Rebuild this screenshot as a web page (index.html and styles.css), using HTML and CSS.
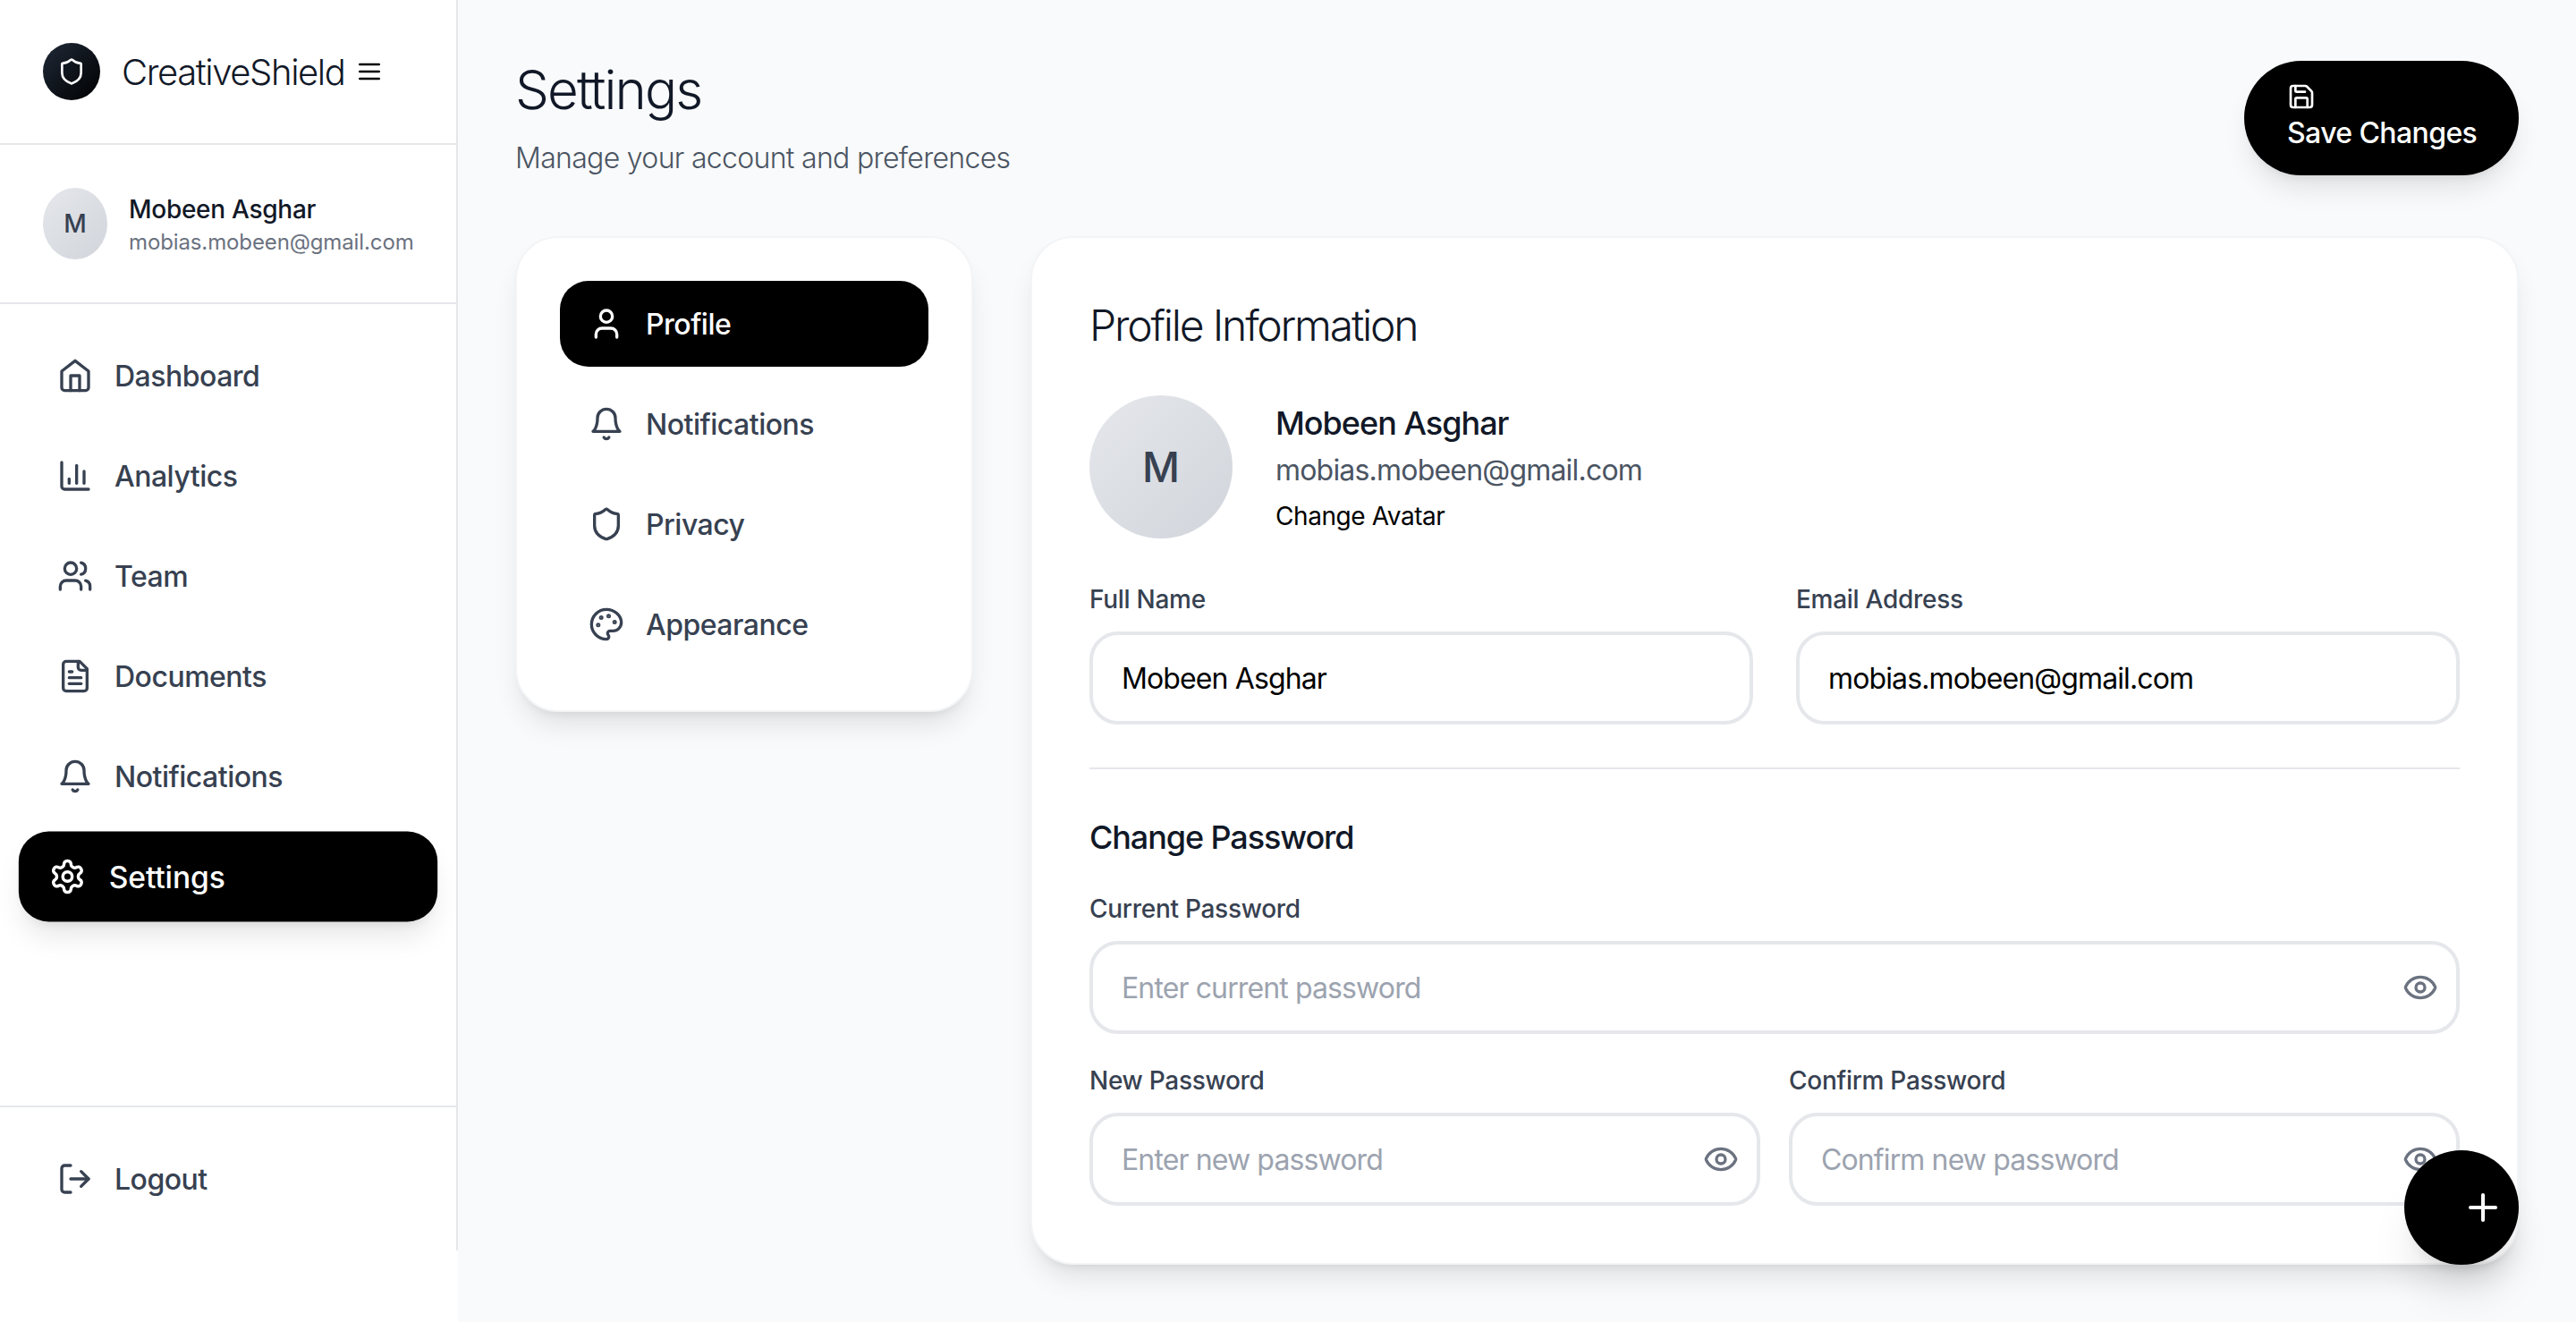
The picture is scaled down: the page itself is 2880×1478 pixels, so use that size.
FILE: index.html
```html
<!DOCTYPE html>
<html lang="en">
<head>
<meta charset="utf-8">
<title>Settings</title>
<link rel="stylesheet" href="styles.css">
</head>
<body>
<svg class="sprite" aria-hidden="true">
  <symbol id="i-home" viewBox="0 0 24 24"><path d="m3 9 9-7 9 7v11a2 2 0 0 1-2 2H5a2 2 0 0 1-2-2z"/><polyline points="9 22 9 12 15 12 15 22"/></symbol>
  <symbol id="i-chart" viewBox="0 0 24 24"><path d="M3 3v16a2 2 0 0 0 2 2h16"/><path d="M18 17V9"/><path d="M13 17V5"/><path d="M8 17v-3"/></symbol>
  <symbol id="i-users" viewBox="0 0 24 24"><path d="M16 21v-2a4 4 0 0 0-4-4H6a4 4 0 0 0-4 4v2"/><circle cx="9" cy="7" r="4"/><path d="M22 21v-2a4 4 0 0 0-3-3.87"/><path d="M16 3.13a4 4 0 0 1 0 7.75"/></symbol>
  <symbol id="i-file" viewBox="0 0 24 24"><path d="M15 2H6a2 2 0 0 0-2 2v16a2 2 0 0 0 2 2h12a2 2 0 0 0 2-2V7Z"/><path d="M14 2v4a2 2 0 0 0 2 2h4"/><path d="M10 9H8"/><path d="M16 13H8"/><path d="M16 17H8"/></symbol>
  <symbol id="i-bell" viewBox="0 0 24 24"><path d="M6 8a6 6 0 0 1 12 0c0 7 3 9 3 9H3s3-2 3-9"/><path d="M10.3 21a1.94 1.94 0 0 0 3.4 0"/></symbol>
  <symbol id="i-gear" viewBox="0 0 24 24"><path d="M12.22 2h-.44a2 2 0 0 0-2 2v.18a2 2 0 0 1-1 1.73l-.43.25a2 2 0 0 1-2 0l-.15-.08a2 2 0 0 0-2.73.73l-.22.38a2 2 0 0 0 .73 2.73l.15.1a2 2 0 0 1 1 1.72v.51a2 2 0 0 1-1 1.74l-.15.09a2 2 0 0 0-.73 2.73l.22.38a2 2 0 0 0 2.73.73l.15-.08a2 2 0 0 1 2 0l.43.25a2 2 0 0 1 1 1.73V20a2 2 0 0 0 2 2h.44a2 2 0 0 0 2-2v-.18a2 2 0 0 1 1-1.73l.43-.25a2 2 0 0 1 2 0l.15.08a2 2 0 0 0 2.73-.73l.22-.39a2 2 0 0 0-.73-2.73l-.15-.08a2 2 0 0 1-1-1.74v-.5a2 2 0 0 1 1-1.74l.15-.09a2 2 0 0 0 .73-2.73l-.22-.38a2 2 0 0 0-2.73-.73l-.15.08a2 2 0 0 1-2 0l-.43-.25a2 2 0 0 1-1-1.73V4a2 2 0 0 0-2-2z"/><circle cx="12" cy="12" r="3"/></symbol>
  <symbol id="i-logout" viewBox="0 0 24 24"><path d="M9 21H5a2 2 0 0 1-2-2V5a2 2 0 0 1 2-2h4"/><polyline points="16 17 21 12 16 7"/><line x1="21" y1="12" x2="9" y2="12"/></symbol>
  <symbol id="i-user" viewBox="0 0 24 24"><path d="M19 21v-2a4 4 0 0 0-4-4H9a4 4 0 0 0-4 4v2"/><circle cx="12" cy="7" r="4"/></symbol>
  <symbol id="i-shield" viewBox="0 0 24 24"><path d="M20 13c0 5-3.5 7.5-7.66 8.95a1 1 0 0 1-.67-.01C7.5 20.5 4 18 4 13V6a1 1 0 0 1 1-1c2 0 4.5-1.2 6.24-2.72a1.17 1.17 0 0 1 1.52 0C14.51 3.81 17 5 19 5a1 1 0 0 1 1 1z"/></symbol>
  <symbol id="i-palette" viewBox="0 0 24 24"><circle cx="13.5" cy="6.5" r=".5" fill="currentColor"/><circle cx="17.5" cy="10.5" r=".5" fill="currentColor"/><circle cx="8.5" cy="7.5" r=".5" fill="currentColor"/><circle cx="6.5" cy="12.5" r=".5" fill="currentColor"/><path d="M12 2C6.5 2 2 6.5 2 12s4.5 10 10 10c.926 0 1.648-.746 1.648-1.688 0-.437-.18-.835-.437-1.125-.29-.289-.438-.652-.438-1.125a1.64 1.64 0 0 1 1.668-1.668h1.996c3.051 0 5.555-2.503 5.555-5.554C21.965 6.012 17.461 2 12 2z"/></symbol>
  <symbol id="i-save" viewBox="0 0 24 24"><path d="M15.2 3a2 2 0 0 1 1.4.6l3.8 3.8a2 2 0 0 1 .6 1.4V19a2 2 0 0 1-2 2H5a2 2 0 0 1-2-2V5a2 2 0 0 1 2-2z"/><path d="M17 21v-7a1 1 0 0 0-1-1H8a1 1 0 0 0-1 1v7"/><path d="M7 3v4a1 1 0 0 0 1 1h7"/></symbol>
  <symbol id="i-eye" viewBox="0 0 24 24"><path d="M2.062 12.348a1 1 0 0 1 0-.696 10.75 10.75 0 0 1 19.876 0 1 1 0 0 1 0 .696 10.75 10.75 0 0 1-19.876 0"/><circle cx="12" cy="12" r="3"/></symbol>
  <symbol id="i-menu" viewBox="0 0 24 24"><line x1="4" y1="6" x2="20" y2="6"/><line x1="4" y1="12" x2="20" y2="12"/><line x1="4" y1="18" x2="20" y2="18"/></symbol>
  <symbol id="i-plus" viewBox="0 0 24 24"><path d="M5 12h14"/><path d="M12 5v14"/></symbol>
</svg>

<div class="app">
  <aside class="aside">
    <div class="sidebar">
      <div class="brand">
        <div class="logo"><svg class="icon icon-32"><use href="#i-shield"/></svg></div>
        <span class="brand-name">CreativeShield</span>
        <svg class="icon icon-32 menu-icon"><use href="#i-menu"/></svg>
      </div>
      <div class="user">
        <div class="user-avatar">M</div>
        <div class="user-text">
          <div class="user-name">Mobeen Asghar</div>
          <div class="user-email">mobias.mobeen@gmail.com</div>
        </div>
      </div>
      <nav class="nav">
        <a class="nav-item"><svg class="icon"><use href="#i-home"/></svg><span>Dashboard</span></a>
        <a class="nav-item"><svg class="icon"><use href="#i-chart"/></svg><span>Analytics</span></a>
        <a class="nav-item"><svg class="icon"><use href="#i-users"/></svg><span>Team</span></a>
        <a class="nav-item"><svg class="icon"><use href="#i-file"/></svg><span>Documents</span></a>
        <a class="nav-item"><svg class="icon"><use href="#i-bell"/></svg><span>Notifications</span></a>
        <a class="nav-item nav-active"><svg class="icon"><use href="#i-gear"/></svg><span>Settings</span></a>
      </nav>
      <div class="sidebar-foot">
        <a class="nav-item"><svg class="icon"><use href="#i-logout"/></svg><span>Logout</span></a>
      </div>
    </div>
  </aside>

  <main class="main">
    <header class="page-head">
      <div>
        <h1 class="page-title">Settings</h1>
        <p class="page-sub">Manage your account and preferences</p>
      </div>
      <button class="save-btn"><svg class="icon icon-32 save-icon"><use href="#i-save"/></svg>Save Changes</button>
    </header>

    <div class="content">
      <div class="card tabs">
        <a class="tab tab-active"><svg class="icon"><use href="#i-user"/></svg><span>Profile</span></a>
        <a class="tab"><svg class="icon"><use href="#i-bell"/></svg><span>Notifications</span></a>
        <a class="tab"><svg class="icon"><use href="#i-shield"/></svg><span>Privacy</span></a>
        <a class="tab"><svg class="icon"><use href="#i-palette"/></svg><span>Appearance</span></a>
      </div>

      <section class="card panel">
        <h2 class="panel-title">Profile Information</h2>
        <div class="profile">
          <div class="profile-avatar">M</div>
          <div class="profile-text">
            <div class="profile-name">Mobeen Asghar</div>
            <div class="profile-email">mobias.mobeen@gmail.com</div>
            <div class="profile-change">Change Avatar</div>
          </div>
        </div>

        <div class="row row-48">
          <label class="field"><span class="label">Full Name</span><input class="input" type="text" value="Mobeen Asghar"></label>
          <label class="field"><span class="label">Email Address</span><input class="input" type="text" value="mobias.mobeen@gmail.com"></label>
        </div>

        <hr class="divider">

        <h3 class="section-title">Change Password</h3>
        <label class="field"><span class="label">Current Password</span>
          <span class="pw"><input class="input" type="text" placeholder="Enter current password"><svg class="icon eye"><use href="#i-eye"/></svg></span>
        </label>
        <div class="row row-32">
          <label class="field"><span class="label">New Password</span>
            <span class="pw"><input class="input" type="text" placeholder="Enter new password"><svg class="icon eye"><use href="#i-eye"/></svg></span>
          </label>
          <label class="field"><span class="label">Confirm Password</span>
            <span class="pw"><input class="input" type="text" placeholder="Confirm new password"><svg class="icon eye"><use href="#i-eye"/></svg></span>
          </label>
        </div>
      </section>
    </div>
  </main>
</div>

<button class="fab" aria-label="Add"><svg class="icon icon-48"><use href="#i-plus"/></svg></button>
</body>
</html>
```
FILE: styles.css
```css
* { box-sizing: border-box; }
html, body { margin: 0; height: 100%; overflow: hidden; }
body {
  font-family: Inter, "Liberation Sans", sans-serif;
  background: #f9fafb;
  color: #111827;
}
.sprite { display: none; }
.icon {
  width: 40px; height: 40px; flex: none;
  fill: none; stroke: currentColor; stroke-width: 2;
  stroke-linecap: round; stroke-linejoin: round;
}
.icon-32 { width: 32px; height: 32px; }
.icon-48 { width: 48px; height: 48px; }

.app { display: flex; height: 1478px; }
.aside { width: 512px; flex: none; background: #fff; height: 100%; }
.sidebar {
  height: 1398px; display: flex; flex-direction: column;
  border-right: 2px solid #e5e7eb;
}
.brand {
  height: 162px; padding: 48px; display: flex; align-items: center;
  border-bottom: 2px solid #e5e7eb;
}
.logo {
  width: 64px; height: 64px; border-radius: 50%; flex: none;
  background: linear-gradient(135deg, #1f2937, #000);
  color: #fff; display: flex; align-items: center; justify-content: center;
}
.brand-name { margin-left: 24px; font-size: 40px; font-weight: 300; color: #111827; letter-spacing: -1.4px; }
.menu-icon { margin-left: 12px; color: #000; }
.user {
  height: 178px; padding: 48px; display: flex; align-items: center; gap: 24px;
  border-bottom: 2px solid #e5e7eb;
}
.user-avatar {
  width: 72px; height: 80px; border-radius: 50%; flex: none;
  background: linear-gradient(135deg, #e5e7eb, #d1d5db);
  color: #374151; font-size: 28px; font-weight: 500;
  display: flex; align-items: center; justify-content: center;
}
.user-name { font-size: 28px; font-weight: 500; line-height: 40px; color: #111827; letter-spacing: -0.28px; position: relative; top: 1px; }
.user-email { font-size: 24px; line-height: 32px; color: #6b7280; margin-top: 2px; white-space: nowrap; letter-spacing: -0.12px; }

.nav { flex: 1; padding: 32px; display: flex; flex-direction: column; gap: 16px; }
.nav-item {
  height: 96px; padding: 0 32px; display: flex; align-items: center; gap: 24px;
  border-radius: 32px; color: #374151; font-size: 32px; font-weight: 500; letter-spacing: -0.5px;
}
.nav-active {
  background: #000; color: #fff; transform: scale(1.05); letter-spacing: -0.1px;
  box-shadow: 0 20px 30px -6px rgba(0,0,0,.1), 0 8px 12px -8px rgba(0,0,0,.1);
}
.sidebar-foot { padding: 32px; border-top: 2px solid #e5e7eb; }

.main { flex: 1; min-width: 0; padding: 64px; display: flex; flex-direction: column; gap: 68px; }
.page-head { display: flex; justify-content: space-between; align-items: flex-start; height: 132px; }
.page-title { margin: 0; font-size: 60px; line-height: 72px; font-weight: 300; color: #111827; letter-spacing: -1.9px; }
.page-sub { margin: 17px 0 0; font-size: 32px; line-height: 48px; font-weight: 300; color: #4b5563; letter-spacing: -0.68px; }
.save-btn {
  border: 0; background: #000; color: #fff; border-radius: 64px;
  padding: 24px 48px; height: 128px; width: 307px; margin-top: 4px;
  font: 500 32px/48px Inter, sans-serif; text-align: left; white-space: nowrap; letter-spacing: -0.6px;
  box-shadow: 0 20px 30px -6px rgba(0,0,0,.1), 0 8px 12px -8px rgba(0,0,0,.1);
}
.save-icon { display: block; margin-bottom: 1px; }

.content { display: flex; gap: 64px; align-items: flex-start; }
.card {
  background: #fff; border: 2px solid #f3f4f6; border-radius: 48px;
  box-shadow: 0 20px 30px -6px rgba(0,0,0,.1), 0 8px 12px -8px rgba(0,0,0,.1);
}
.tabs { width: 512px; flex: none; padding: 48px; display: flex; flex-direction: column; gap: 16px; }
.tab {
  height: 96px; padding: 0 32px; display: flex; align-items: center; gap: 24px;
  border-radius: 32px; color: #374151; font-size: 32px; font-weight: 500; letter-spacing: -0.5px;
}
.tab-active { background: #000; color: #fff; }

.panel { flex: 1; min-width: 0; height: 1150px; padding: 64px; }
.panel-title { margin: 0; font-size: 48px; line-height: 64px; font-weight: 300; color: #111827; letter-spacing: -2.2px; position: relative; top: 2px; }
.profile { display: flex; align-items: center; gap: 48px; margin-top: 48px; }
.profile-avatar {
  width: 160px; height: 160px; border-radius: 50%; flex: none;
  background: linear-gradient(135deg, #e5e7eb, #d1d5db);
  color: #374151; font-size: 46px; font-weight: 500;
  display: flex; align-items: center; justify-content: center;
}
.profile-name { font-size: 36px; line-height: 56px; font-weight: 500; color: #111827; letter-spacing: -1px; position: relative; top: -2px; }
.profile-email { font-size: 32px; line-height: 48px; color: #4b5563; letter-spacing: -0.8px; position: relative; top: -1px; }
.profile-change { font-size: 28px; line-height: 40px; color: #000; margin-top: 6px; letter-spacing: -0.42px; }

.row { display: grid; grid-template-columns: 1fr 1fr; }
.row-48 { gap: 48px; margin-top: 48px; }
.row-32 { gap: 32px; margin-top: 32px; }
.field { display: block; }
.label { display: block; font-size: 28px; line-height: 40px; font-weight: 500; color: #374151; margin-bottom: 16px; letter-spacing: -0.28px; }
.input {
  display: block; width: 100%; height: 104px; padding: 0 32px;
  background: #fff; border: 4px solid #e5e7eb; border-radius: 32px; outline: none;
  font: 400 32px Inter, sans-serif; color: #000; letter-spacing: -0.88px;
}
.input::placeholder { color: #9ca3af; opacity: 1; }
.divider { border: 0; border-top: 2px solid #e5e7eb; margin: 48px 0 0; }
.section-title { margin: 48px 0 32px; font-size: 36px; line-height: 56px; font-weight: 500; color: #111827; letter-spacing: -1.1px; }
.pw { display: block; position: relative; }
.eye { position: absolute; right: 24px; top: 32px; color: #6b7280; }

.fab {
  position: fixed; right: 64px; bottom: 64px; width: 128px; height: 128px;
  border: 0; border-radius: 50%; background: #000; color: #fff;
  display: flex; align-items: center; justify-content: flex-end; padding: 0 16px 0 0;
  box-shadow: 0 40px 50px -10px rgba(0,0,0,.1), 0 16px 20px -12px rgba(0,0,0,.1);
}
```
